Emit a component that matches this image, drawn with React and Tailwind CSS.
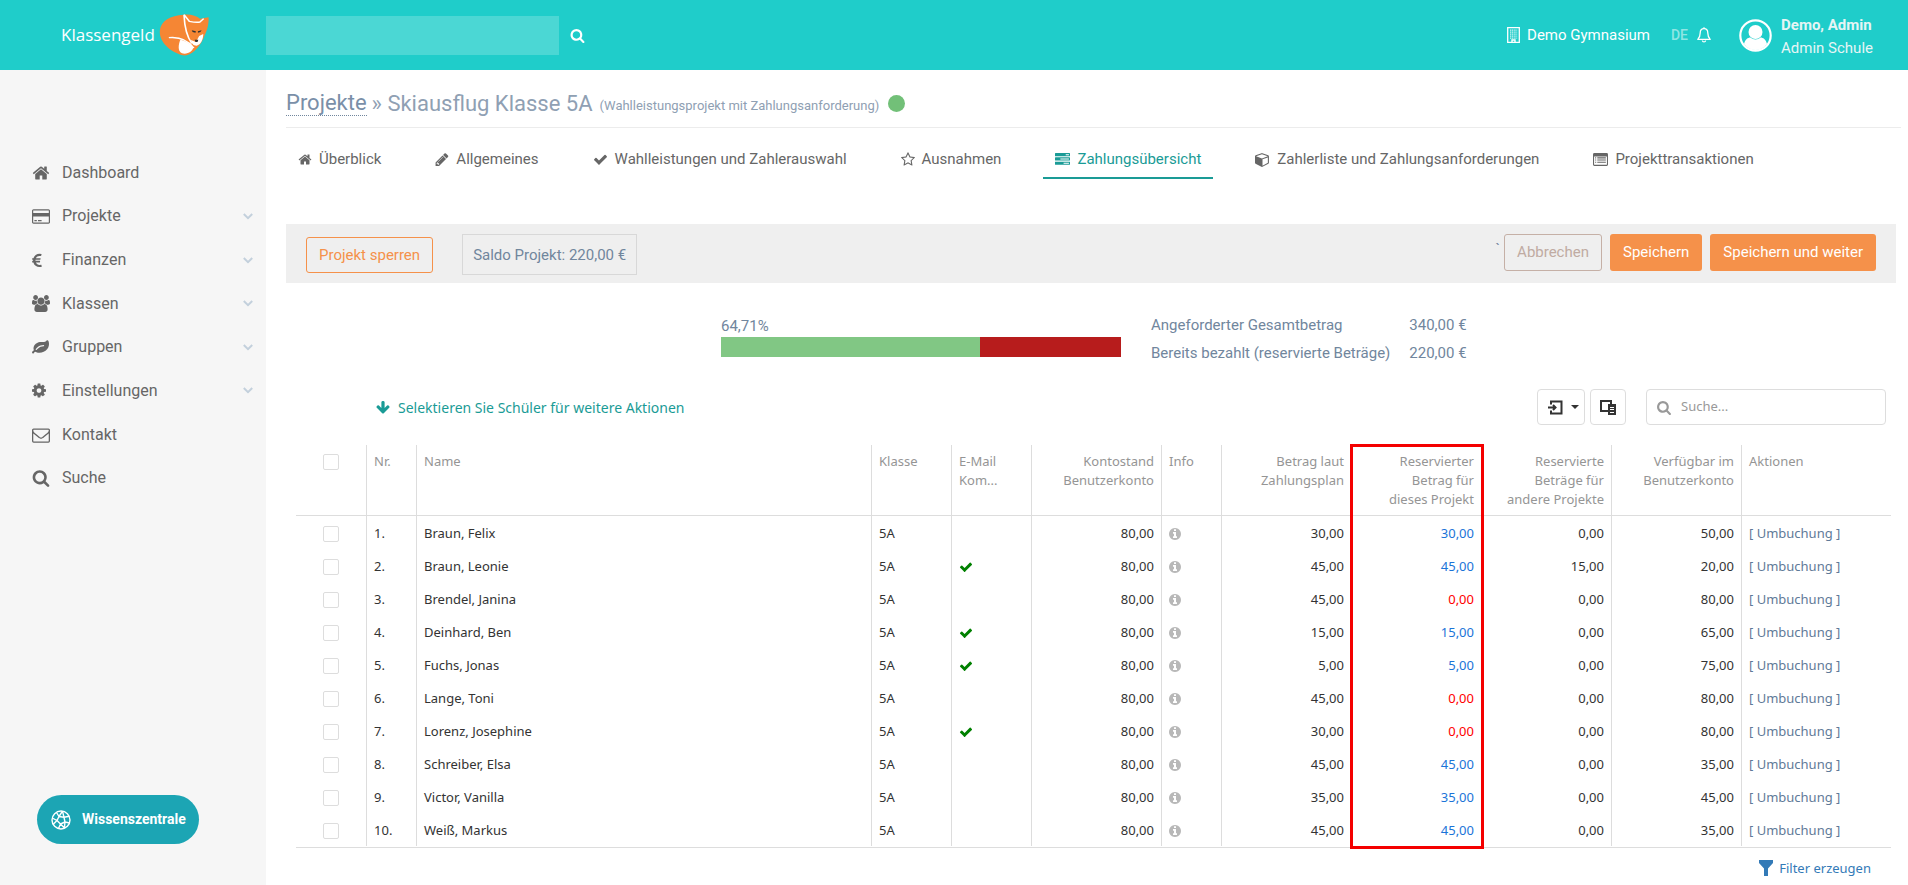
import React from "react";

const ICONS = {
  home: ["0 0 1792 1792", "M1472 992v480q0 26-19 45t-45 19h-384v-384h-256v384h-384q-26 0-45-19t-19-45v-480q0-1 .5-3t.5-3l575-474 575 474q1 2 1 6zm223-69l-62 74q-8 9-21 11h-3q-13 0-21-7l-692-577-692 577q-12 8-24 7-13-2-21-11l-62-74q-8-10-7-23.5t11-21.5l719-599q32-26 76-26t76 26l244 204v-195q0-14 9-23t23-9h192q14 0 23 9t9 23v408l219 182q10 8 11 21.5t-7 23.5z"],
  card: ["0 0 1920 1792", "M1760 128q66 0 113 47t47 113v1216q0 66-47 113t-113 47h-1600q-66 0-113-47t-47-113v-1216q0-66 47-113t113-47h1600zm-1600 128q-13 0-22.5 9.5t-9.5 22.5v224h1664v-224q0-13-9.5-22.5t-22.5-9.5h-1600zm1600 1280q13 0 22.5-9.5t9.5-22.5v-608h-1664v608q0 13 9.5 22.5t22.5 9.5h1600zm-1504-128v-128h256v128h-256zm384 0v-128h384v128h-384z"],
  euro: ["384 0 1024 1792", "M1362 1363l35 159q3 12-3 22.5t-17 14.5l-5 1q-4 2-10.5 3.5t-16 4.5-21.5 5.5-25.5 5-30 5-33.5 4.5-36.5 3-38.5 1q-234 0-409-130.5t-238-351.5h-95q-13 0-22.5-9.5t-9.5-22.5v-113q0-13 9.5-22.5t22.5-9.5h66q-2-57 1-105h-67q-14 0-23-9t-9-23v-114q0-14 9-23t23-9h98q67-210 243.5-338t400.5-128q102 0 194 23 11 3 20 15 6 11 3 24l-43 159q-3 13-14 19.5t-24 2.5l-4-1q-4-1-11.5-2.5l-17.5-3.5-22.5-3.5-26-3-29-2.5-29.5-1q-126 0-226 64t-150 176h468q16 0 25 12 10 12 7 26l-24 114q-5 26-32 26h-488q-3 37 0 105h459q15 0 25 12 9 12 6 27l-24 112q-2 11-11 18.5t-20 7.5h-387q48 117 149.5 185.5t228.5 68.5q18 0 36-1.5t33.5-3.5 29.5-4.5 24.5-5 18.5-4.5l12-3 5-2q13-5 26 2 12 7 15 21z"],
  users: ["0 0 1920 1792", "M593 896q-162 5-265 128h-134q-82 0-138-40.5t-56-118.5q0-353 124-353 6 0 43.5 21t97.5 42.5 119 21.5q67 0 133-23-5 37-5 66 0 139 81 256zm1071 637q0 120-73 189.5t-194 69.5h-874q-121 0-194-69.5t-73-189.5q0-53 3.5-103.5t14-109 26.5-108.5 43-97.5 62-81 85.5-53.5 111.5-20q10 0 43 21.5t73 48 107 48 135 21.5 135-21.5 107-48 73-48 43-21.5q61 0 111.5 20t85.5 53.5 62 81 43 97.5 26.5 108.5 14 109 3.5 103.5zm-1024-1277q0 106-75 181t-181 75-181-75-75-181 75-181 181-75 181 75 75 181zm704 384q0 159-112.5 271.5t-271.5 112.5-271.5-112.5-112.5-271.5 112.5-271.5 271.5-112.5 271.5 112.5 112.5 271.5zm576 225q0 78-56 118.5t-138 40.5h-134q-103-123-265-128 81-117 81-256 0-29-5-66 66 23 133 23 59 0 119-21.5t97.5-42.5 43.5-21q124 0 124 353zm-128-609q0 106-75 181t-181 75-181-75-75-181 75-181 181-75 181 75 75 181z"],
  leaf: ["0 0 1792 1792", "M1280 704q0-26-19-45t-45-19q-172 0-318 49.5t-259.5 134-235.5 219.5q-19 21-19 45 0 26 19 45t45 19q24 0 45-19 27-24 74-71t67-66q137-124 268.5-176t313.5-52q26 0 45-19t19-45zm512-198q0 95-20 193-46 224-184.5 383t-357.5 268q-214 108-438 108-148 0-286-47-15-5-88-42t-96-37q-16 0-39.5 32t-45 70-52.5 70-60 32q-43 0-63.5-17.5t-45.5-59.5q-2-4-6-11t-5.5-10-3-9.5-1.5-13.5q0-35 31-73.5t68-65.5 68-56 31-48q0-4-14-38t-16-44q-9-51-9-104 0-115 43.5-220t119-184.5 170.5-139 204-95.5q55-18 145-25.5t179.5-9 178.5-6 163.5-24 113.5-56.5l29.5-29.5 29.5-28 27-20 36.5-16 43.5-4.5q39 0 70.5 46t47.5 112 24 124 8 96z"],
  cog: ["128 0 1536 1792", "M1152 896q0-106-75-181t-181-75-181 75-75 181 75 181 181 75 181-75 75-181zm512-109v222q0 12-8 23t-20 13l-185 28q-19 54-39 91 35 50 107 138 10 12 10 25t-9 23q-27 37-99 108t-94 71q-12 0-26-9l-138-108q-44 23-91 38-16 136-29 186-7 28-36 28h-222q-14 0-24.5-8.5t-11.5-21.5l-28-184q-49-16-90-37l-141 107q-10 9-25 9-14 0-25-11-126-114-165-168-7-10-7-23 0-12 8-23 15-21 51-66.5t54-70.5q-27-50-41-99l-183-27q-13-2-21-12.5t-8-23.5v-222q0-12 8-23t19-13l186-28q14-46 39-92-40-57-107-138-10-12-10-24 0-10 9-23 26-36 98.5-107.5t94.5-71.5q13 0 26 10l138 107q44-23 91-38 16-136 29-186 7-28 36-28h222q14 0 24.5 8.5t11.5 21.5l28 184q49 16 90 37l142-107q9-9 24-9 13 0 25 10 129 119 165 170 7 8 7 22 0 12-8 23-15 21-51 66.5t-54 70.5q26 50 41 98l183 28q13 2 21 12.5t8 23.5z"],
  mail: ["0 0 1792 1792", "M1664 1504v-768q-32 36-69 66-268 206-426 338-51 43-83 67t-86.5 48.5-102.5 24.5h-2q-48 0-102.5-24.5t-86.5-48.5-83-67q-158-132-426-338-37-30-69-66v768q0 13 9.5 22.5t22.5 9.5h1472q13 0 22.5-9.5t9.5-22.5zm0-1051v-24.5l-.5-13-3-12.5-5.5-9-9-7.5-14-2.5h-1472q-13 0-22.5 9.5t-9.5 22.5q0 168 147 284 193 152 401 317 6 5 35 29.5t46 37.5 44.5 31.5 50.5 27.5 43 9h2q20 0 43-9t50.5-27.5 44.5-31.5 46-37.5 35-29.5q208-165 401-317 54-43 100.5-115.5t46.5-131.5zm128-37v1088q0 66-47 113t-113 47h-1472q-66 0-113-47t-47-113v-1088q0-66 47-113t113-47h1472q66 0 113 47t47 113z"],
  search: ["64 0 1664 1792", "M1216 832q0-185-131.5-316.5t-316.5-131.5-316.5 131.5-131.5 316.5 131.5 316.5 316.5 131.5 316.5-131.5 131.5-316.5zm512 832q0 52-38 90t-90 38q-54 0-90-38l-343-342q-179 124-399 124-143 0-273.5-55.5t-225-150-150-225-55.5-273.5 55.5-273.5 150-225 225-150 273.5-55.5 273.5 55.5 225 150 150 225 55.5 273.5q0 220-124 399l343 343q37 37 37 90z"],
  check: ["0 0 1792 1792", "M1671 566q0 40-28 68l-724 724-136 136q-28 28-68 28t-68-28l-136-136-362-362q-28-28-28-68t28-68l136-136q28-28 68-28t68 28l294 295 656-657q28-28 68-28t68 28l136 136q28 28 28 68z"],
  pencil: ["128 0 1536 1792", "M491 1536l91-91-235-235-91 91v107h128v128h107zm523-928q0-22-22-22-10 0-17 7l-542 542q-7 7-7 17 0 22 22 22 10 0 17-7l542-542q7-7 7-17zm-54-192l416 416-832 832h-416v-416zm683 96q0 53-37 90l-166 166-416-416 166-165q36-38 90-38 53 0 91 38l235 234q37 39 37 91z"],
  star: ["64 0 1664 1792", "M1201 1004l306-297-422-62-189-382-189 382-422 62 306 297-73 421 378-199 377 199zm527-357q0 22-26 48l-363 354 86 500q1 7 1 20 0 50-41 50-19 0-40-12l-449-236-449 236q-22 12-40 12-21 0-31.5-14.5t-10.5-35.5q0-6 2-20l86-500-364-354q-25-27-25-48 0-37 56-46l502-73 225-455q19-41 49-41t49 41l225 455 502 73q56 9 56 46z"],
  tasks: ["0 0 1792 1792", "M1024 1408h640v-128h-640v128zm-384-512h1024v-128h-1024v128zm640-512h384v-128h-384v128zm512 832v256q0 26-19 45t-45 19h-1664q-26 0-45-19t-19-45v-256q0-26 19-45t45-19h1664q26 0 45 19t19 45zm0-512v256q0 26-19 45t-45 19h-1664q-26 0-45-19t-19-45v-256q0-26 19-45t45-19h1664q26 0 45 19t19 45zm0-512v256q0 26-19 45t-45 19h-1664q-26 0-45-19t-19-45v-256q0-26 19-45t45-19h1664q26 0 45 19t19 45z"],
  cube: ["0 0 1792 1792", "M896 1629l640-349v-636l-640 233v752zm-64-865l698-254-698-254-698 254zm832-252v768q0 35-18 65t-49 47l-704 384q-28 16-61 16t-61-16l-704-384q-31-17-49-47t-18-65v-768q0-40 23-73t61-47l704-256q22-8 44-8t44 8l704 256q38 14 61 47t23 73z"],
  list: ["0 0 1792 1792", "M160 128h1472q160 0 160 160v1216q0 160-160 160h-1472q-160 0-160-160v-1216q0-160 160-160zM128 544v928q0 64 64 64h1408q64 0 64-64v-928zM256 640h128v128h-128zM512 640h1024v128h-1024zM256 896h128v128h-128zM512 896h1024v128h-1024zM256 1152h128v128h-128zM512 1152h1024v128h-1024z"],
  info: ["128 0 1536 1792", "M1152 1376v-160q0-14-9-23t-23-9h-96v-512q0-14-9-23t-23-9h-320q-14 0-23 9t-9 23v160q0 14 9 23t23 9h96v320h-96q-14 0-23 9t-9 23v160q0 14 9 23t23 9h448q14 0 23-9t9-23zm-128-896v-160q0-14-9-23t-23-9h-192q-14 0-23 9t-9 23v160q0 14 9 23t23 9h192q14 0 23-9t9-23zm640 416q0 209-103 385.5t-279.5 279.5-385.5 103-385.5-103-279.5-279.5-103-385.5 103-385.5 279.5-279.5 385.5-103 385.5 103 279.5 279.5 103 385.5z"],
  down: ["64 0 1664 1792", "M1675 832q0 53-37 90l-651 652q-39 37-91 37-53 0-90-37l-651-652q-38-36-38-90 0-53 38-91l74-75q39-37 91-37 53 0 90 37l294 294v-704q0-52 38-90t90-38h128q52 0 90 38t38 90v704l294-294q37-37 90-37 52 0 91 37l75 75q37 39 37 91z"],
};

function Icon({ name, className }) {
  const [box, d] = ICONS[name];
  return (
    <svg viewBox={box} className={className} fill="currentColor" fillRule="evenodd" aria-hidden="true">
      <path d={d} />
    </svg>
  );
}

const NAV = [
  ["home", "Dashboard", false, "h-[18px] w-[18px]"],
  ["card", "Projekte", true, "h-[17px] w-[18px]"],
  ["euro", "Finanzen", true, "h-[17px] w-[10px]"],
  ["users", "Klassen", true, "h-[17px] w-[18px]"],
  ["leaf", "Gruppen", true, "h-[17px] w-[17px]"],
  ["cog", "Einstellungen", true, "h-[17px] w-[14px]"],
  ["mail", "Kontakt", false, "h-[18px] w-[18px]"],
  ["search", "Suche", false, "h-[18px] w-[18px]"],
];

const TABS = [
  ["home", "Überblick", "h-[15px] w-[14px]"],
  ["pencil", "Allgemeines", "h-[15px] w-[14px]"],
  ["check", "Wahlleistungen und Zahlerauswahl", "h-[15px] w-[15px]"],
  ["star", "Ausnahmen", "h-[15px] w-[14px]"],
  ["tasks", "Zahlungsübersicht", "h-[15px] w-[15px]"],
  ["cube", "Zahlerliste und Zahlungsanforderungen", "h-[15px] w-[15px]"],
  ["list", "Projekttransaktionen", "h-[15px] w-[15px]"],
];

const ROWS = [
  ["Braun, Felix", false, "30,00", "30,00", "0,00", "50,00"],
  ["Braun, Leonie", true, "45,00", "45,00", "15,00", "20,00"],
  ["Brendel, Janina", false, "45,00", "0,00", "0,00", "80,00"],
  ["Deinhard, Ben", true, "15,00", "15,00", "0,00", "65,00"],
  ["Fuchs, Jonas", true, "5,00", "5,00", "0,00", "75,00"],
  ["Lange, Toni", false, "45,00", "0,00", "0,00", "80,00"],
  ["Lorenz, Josephine", true, "30,00", "0,00", "0,00", "80,00"],
  ["Schreiber, Elsa", false, "45,00", "45,00", "0,00", "35,00"],
  ["Victor, Vanilla", false, "35,00", "35,00", "0,00", "45,00"],
  ["Weiß, Markus", false, "45,00", "45,00", "0,00", "35,00"],
];

function Header() {
  return (
    <header className="flex h-[70px] items-center bg-[#1fcdca] text-white">
      <a href="#start" className="flex w-[266px] shrink-0 items-center gap-1 pl-[61px]">
        <span className="font-['Open_Sans',sans-serif] text-[17px] leading-6">Klassengeld</span>
        <svg viewBox="0 0 122 126" preserveAspectRatio="none" className="h-[42px] w-[50px]" aria-hidden="true">
          <path fill="#f58634" d="M2 50C4 20 28 4 60 2C78 0 92 6 100 14L121 10C122 34 116 54 108 74C96 104 78 126 58 124C28 114 0 84 2 50Z" />
          <path fill="#fff" d="M98 66L108 60C108 76 102 92 92 95C82 95 80 88 78 78L90 84Z" />
          <path fill="#fff" d="M52 77C48 90 44 110 56 118C70 122 82 112 84 100C76 90 66 80 52 77Z" />
          <path fill="none" stroke="#fff" strokeWidth="4" d="M24 71C48 68 70 78 85 102M61 2L74 22C82 24 92 26 100 24L109 14M61 2C62 30 66 64 80 88" />
          <path fill="#333" d="M80 49l10 3-1 4-7-2zM104 49l-9 3 0 4 6-2zM87 77h9l-2 7h-5z" />
        </svg>
      </a>
      <form className="flex items-center gap-[11px]" role="search">
        <input aria-label="Suche" className="h-[39px] w-[293px] bg-white/20 px-3 outline-none" />
        <button type="button" aria-label="Suchen"><Icon name="search" className="h-[15px] w-[15px]" /></button>
      </form>
      <div className="ml-auto flex items-center pr-[35px] text-[15px] leading-6">
        <svg viewBox="0 0 13 16" className="mr-[7px] h-[16px] w-[13px]" fill="none" stroke="currentColor" aria-hidden="true">
          <path strokeWidth="1.3" d="M.7.7h11.6v14.6H.7z" />
          <path strokeWidth="1.2" opacity=".8" strokeDasharray="1.2 .6" d="M3 3.2h7.4M3 5.2h7.4M3 7.2h7.4M3 9.2h7.4M3 11.2h7.4" />
          <path strokeWidth="1.4" d="M5 15v-2h3v2" />
        </svg>
        <a href="#schule" className="mr-[21px]">Demo Gymnasium</a>
        <a href="#sprache" className="mr-[9px] text-[14px] font-medium text-white/50">DE</a>
        <button type="button" aria-label="Benachrichtigungen" className="mr-7">
          <svg viewBox="0 0 14 16" className="h-[16px] w-[14px]" fill="none" stroke="currentColor" strokeWidth="1.3" aria-hidden="true">
            <path strokeLinejoin="round" d="M7 1.6C4.400 1.600 3.200 3.600 3.200 6C3.200 9.500 2.200 11 .8 12.400H13.200C11.800 11 10.800 9.500 10.800 6C10.800 3.600 9.600 1.600 7 1.600Z" />
            <path d="M7 .2v1.600M5.400 13.500C5.600 15.400 8.400 15.400 8.600 13.500" />
          </svg>
        </button>
        <svg viewBox="0 0 33 33" className="mr-[9px] h-[33px] w-[33px]" aria-hidden="true">
          <circle cx="16.500" cy="16.500" r="15.200" fill="none" stroke="#fff" strokeWidth="2.200" />
          <circle cx="16.500" cy="13" r="7" fill="#fff" />
          <path fill="#fff" d="M5 25C6 20.500 9 18.500 11.500 18.500C14 21 19 21 21.500 18.500C24 18.500 27 20.500 28 25C22 33 11 33 5 25Z" />
        </svg>
        <a href="#profil" className="pt-1 text-[#e6f5f5]">
          <b className="block leading-[23px]">Demo, Admin</b>
          <span className="block leading-[23px]">Admin Schule</span>
        </a>
      </div>
    </header>
  );
}

function Sidebar() {
  return (
    <aside className="flex w-[266px] shrink-0 flex-col bg-[#f6f6f6] pt-[81px]">
      <nav className="grid h-[349px] grid-rows-8 text-[#666]">
        {NAV.map(([icon, label, sub, size]) => (
          <a key={label} href={"#" + label} className="flex items-center pr-[13px] pl-8 text-[16px]">
            <span className="flex w-[30px]"><Icon name={icon} className={size} /></span>
            <span className="flex-1">{label}</span>
            {sub && (
              <svg viewBox="0 0 10 7" className="h-[7px] w-[10px]" fill="none" stroke="#c3d0dc" strokeWidth="2" aria-hidden="true">
                <path d="M.8 1l4.200 4.200L9.200 1" />
              </svg>
            )}
          </a>
        ))}
      </nav>
      <button type="button" className="mt-auto mb-[41px] ml-[37px] flex h-[49px] w-[162px] items-center gap-[11px] rounded-full bg-[#1ca5b4] pl-[14px] text-[14px] font-bold text-white">
        <svg viewBox="0 0 20 20" className="h-5 w-5" fill="none" stroke="currentColor" strokeWidth="1.400" strokeLinejoin="round" aria-hidden="true">
          <circle cx="10" cy="10" r="9" />
          <path d="M8 6.500l5 .8 1 4.700-4.500 2-3.500-3.500zM8 6.500L5.500 2.500M8 6.500L11.500 1.200M13 7.300L11.500 1.200M13 7.300l5.400-1M14 12l4.500 1M14 12l-.6 6M9.500 14l4 4M9.500 14l-2 4.500M6 10.500L2 14.500M6 10.500L1.200 8" />
        </svg>
        Wissenszentrale
      </button>
    </aside>
  );
}

function Actions() {
  return (
    <div className="mr-3 flex h-[59px] items-start bg-[#efefef] pr-5 pl-5 text-[15px]">
      <button type="button" className="mt-[13px] h-[36px] rounded-[3px] border border-[#f5914a] px-3 text-[#f5914a]">Projekt sperren</button>
      <div className="mt-[10px] ml-[29px] flex h-[41px] items-center border border-[#d8d8d8] px-[10px] pt-[2px] text-[#71869d]">Saldo Projekt: 220,00 €</div>
      <div className="mt-[10px] ml-auto flex gap-2">
        <span className="-mr-1 pt-1 text-[#71869d]">`</span>
        <button type="button" className="h-[37px] rounded-[3px] border border-[#c5b0a6] px-3 text-[#c0aba2]">Abbrechen</button>
        <button type="button" className="h-[37px] rounded-[3px] bg-[#f5914a] px-[13px] text-white">Speichern</button>
        <button type="button" className="h-[37px] rounded-[3px] bg-[#f5914a] px-[13px] text-white">Speichern und weiter</button>
      </div>
    </div>
  );
}

function Summary() {
  return (
    <div className="mt-7 ml-[435px] flex gap-[30px] text-[15px] leading-7 text-[#71869d]">
      <div className="w-[400px] pt-[4px]">
        <div className="leading-[22px]">64,71%</div>
        <div className="flex h-5 bg-[#b71c1c]">
          <div className="bg-[#81c784]" style={{ width: "64.71%" }} />
        </div>
      </div>
      <dl className="grid grid-cols-[auto_auto] gap-x-[19px]">
        <dt>Angeforderter Gesamtbetrag</dt><dd>340,00 €</dd>
        <dt>Bereits bezahlt (reservierte Beträge)</dt><dd>220,00 €</dd>
      </dl>
    </div>
  );
}

const CHECK = "block h-4 w-4 mx-auto appearance-none rounded-[2px] border border-[#ddd] bg-white checked:bg-[#1a9b96]";
const TH = "border-l border-b border-[#ddd] px-[7px] pt-[7px] align-top font-normal";
const TD = "border-l border-[#ddd] px-[7px] pt-[2px]";

function Students() {
  return (
    <div className="relative border-b border-[#ddd] pb-px">
      <table className="w-full table-fixed border-separate border-spacing-0 text-left font-['Noto_Sans',sans-serif] text-[13px] leading-[19px] text-[#333]">
        <colgroup>
          <col className="w-[70px]" /><col className="w-[50px]" /><col /><col className="w-[80px]" />
          <col className="w-[80px]" /><col className="w-[130px]" /><col className="w-[60px]" /><col className="w-[130px]" />
          <col className="w-[130px]" /><col className="w-[130px]" /><col className="w-[130px]" /><col className="w-[150px]" />
        </colgroup>
        <thead>
          <tr className="h-[71px] text-[#959595]">
            <th className="border-b border-[#ddd] pt-[9px] align-top"><input type="checkbox" aria-label="Alle auswählen" className={CHECK} /></th>
            <th className={TH}>Nr.</th>
            <th className={TH}>Name</th>
            <th className={TH}>Klasse</th>
            <th className={TH}>E-Mail<br />Kom...</th>
            <th className={TH + " text-right"}>Kontostand Benutzerkonto</th>
            <th className={TH}>Info</th>
            <th className={TH + " text-right"}>Betrag laut Zahlungsplan</th>
            <th className={TH + " text-right"}>Reservierter Betrag für<br />dieses Projekt</th>
            <th className={TH + " text-right"}>Reservierte Beträge für<br />andere Projekte</th>
            <th className={TH + " text-right"}>Verfügbar im Benutzerkonto</th>
            <th className={TH}>Aktionen</th>
          </tr>
        </thead>
        <tbody>
          {ROWS.map(([name, mail, plan, reserved, other, free], i) => (
            <tr key={name} className="h-[33px]">
              <td className="pt-[3px]"><input type="checkbox" aria-label={name} className={CHECK} /></td>
              <td className={TD}>{i + 1}.</td>
              <td className={TD}>{name}</td>
              <td className={TD}>5A</td>
              <td className={TD}>{mail && <Icon name="check" className="h-[14px] w-[14px] text-[#008000]" />}</td>
              <td className={TD + " text-right"}>80,00</td>
              <td className={TD}><Icon name="info" className="h-[14px] w-[12px] text-[#b8b8b8]" /></td>
              <td className={TD + " text-right"}>{plan}</td>
              <td className={TD + " text-right " + (reserved === "0,00" ? "text-[#f00]" : "text-[#1b74d8]")}>{reserved}</td>
              <td className={TD + " text-right"}>{other}</td>
              <td className={TD + " text-right"}>{free}</td>
              <td className={TD}><a href="#umbuchung" className="text-[#5f7a98]">[ Umbuchung ]</a></td>
            </tr>
          ))}
        </tbody>
      </table>
      <div className="pointer-events-none absolute -top-px -bottom-[2px] right-[407px] w-[134px] border-[3px] border-[#f40000]" />
    </div>
  );
}

export default function App() {
  return (
    <div className="flex min-h-screen flex-col bg-white font-['Roboto',sans-serif]">
      <Header />
      <div className="flex flex-1">
        <Sidebar />
        <main className="min-w-0 flex-1 pl-5">
          <h1 className="mr-[7px] flex h-[58px] items-center border-b border-[#ececec] pt-[9px] text-[22px] text-[#8fa0b3]">
            <a href="#projekte" className="border-b border-dotted border-[#71869d] leading-6 text-[#7a8fa8]">Projekte</a>
            <span className="ml-[5px]">» Skiausflug Klasse 5A</span>
            <small className="ml-[7px] pt-[6px] text-[13px]">(Wahlleistungsprojekt mit Zahlungsanforderung)</small>
            <span className="ml-[9px] h-[17px] w-[17px] rounded-full bg-[#72c078]" />
          </h1>
          <nav className="mt-[14px] flex gap-[30px] text-[15px] text-[#666]">
            {TABS.map(([icon, label, size]) => (
              <a
                key={label}
                href={"#" + label}
                className={"flex h-[37px] items-center gap-[7px] border-b-2 px-3 whitespace-nowrap " + (icon === "tasks" ? "border-[#1a9b96] text-[#1a9b96]" : "border-transparent")}
              >
                <Icon name={icon} className={size} />
                {label}
              </a>
            ))}
          </nav>
          <div className="mt-[45px]">
            <Actions />
            <Summary />
          </div>
          <section className="mr-[17px] ml-[10px] font-['Noto_Sans',sans-serif]">
            <div className="mt-[22px] mb-5 flex h-[36px] items-center pr-[5px]">
              <a href="#aktionen" className="ml-20 flex items-center gap-2 text-[14px] text-[#1a9b96]">
                <Icon name="down" className="h-[15px] w-[14px]" />
                Selektieren Sie Schüler für weitere Aktionen
              </a>
              <button type="button" aria-label="Exportieren" className="ml-auto flex h-[36px] w-12 items-center justify-center gap-2 rounded border border-[#ddd] pl-1 text-[#333]">
                <svg viewBox="0 0 15 15" className="h-[15px] w-[15px]" fill="none" stroke="currentColor" strokeWidth="2" aria-hidden="true">
                  <path d="M3 4.500V1.500H13.500V13.500H3V10.500M0 7.500H7M5 5l2.500 2.500L5 10" />
                </svg>
                <svg viewBox="0 0 8 4" className="h-[4px] w-[8px]" fill="currentColor" aria-hidden="true"><path d="M0 0h8L4 4z" /></svg>
              </button>
              <button type="button" aria-label="Spaltenauswahl" className="ml-[5px] flex h-[36px] w-[36px] items-center justify-center rounded border border-[#ddd] text-[#333]">
                <svg viewBox="0 0 16 15" className="h-[15px] w-[16px]" aria-hidden="true">
                  <path fill="none" stroke="currentColor" strokeWidth="2" d="M8 11H1V1h10v3" />
                  <path fill="currentColor" d="M8 4h8v11H8z" />
                  <path stroke="#fff" d="M10 7.500h4M10 9.500h4M10 12.500h4" />
                </svg>
              </button>
              <label className="ml-5 flex h-[36px] w-[240px] items-center gap-[9px] rounded border border-[#ddd] px-[9px] text-[#999]">
                <Icon name="search" className="h-[15px] w-[16px]" />
                <input aria-label="Suche in Tabelle" placeholder="Suche..." className="min-w-0 flex-1 text-[13px] outline-none placeholder:text-[#999]" />
              </label>
            </div>
            <Students />
            <a href="#filter" className="mt-[9px] mr-5 ml-auto flex w-fit items-center gap-[6px] text-[13px] leading-[22px] text-[#337ab7]">
              <svg viewBox="0 0 14 16" className="h-[16px] w-[14px]" fill="currentColor" aria-hidden="true"><path d="M0 0h14v3L9 8.500V16H5V8.500L0 3z" /></svg>
              Filter erzeugen
            </a>
          </section>
        </main>
      </div>
    </div>
  );
}
